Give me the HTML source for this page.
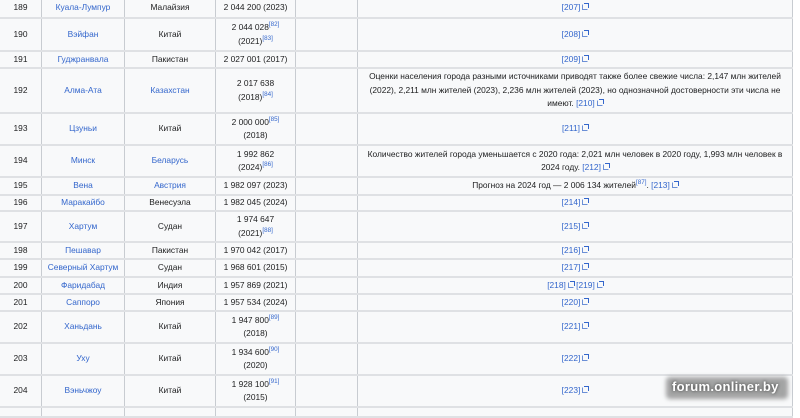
<!DOCTYPE html>
<html><head><meta charset="utf-8"><style>
*{margin:0;padding:0;box-sizing:border-box}
body{width:800px;height:409px;background:#fff;overflow:hidden;position:relative;font-family:"Liberation Sans",Arial,sans-serif;font-size:8.4px;color:#202122}
.r{position:absolute;left:0;width:793px;background:#f8f9fa;border-bottom:2px solid #dfe1e4}
.c{position:absolute;top:0;bottom:0;display:flex;align-items:center;justify-content:center;text-align:center;line-height:13.5px;border-right:1px solid #c8ccd1}
.c>div{width:100%}
.c1{left:0;width:42px}.c2{left:42px;width:83px}.c3{left:125px;width:91px}.c4{left:216px;width:80px}.c5{left:296px;width:62px}.c6{left:358px;width:435px;padding:0 5px}
a{color:#3366cc;text-decoration:none}
sup{font-size:6.3px;vertical-align:4px;line-height:0;color:#3366cc}
.e{display:inline-block;width:6px;height:6px;margin-left:2px;position:relative;border:1px solid #6b8fd6;border-top-color:transparent;border-right-color:transparent}
.e:after{content:"";position:absolute;right:-2px;top:-2px;width:4px;height:4px;border-top:1px solid #3366cc;border-right:1px solid #3366cc}
.wm{position:absolute;left:666px;top:377px;width:122px;height:22px;border-radius:4px;background:rgba(60,60,60,.45);filter:blur(2px)}
.wt{position:absolute;left:672px;top:379px;color:#fff;font-weight:bold;font-size:13px;letter-spacing:.3px;text-shadow:0 0 3px #333}
</style></head><body>

<div class="r" style="top:-1px;height:20px"><div class="c c1"><div>189</div></div><div class="c c2"><div><a>Куала-Лумпур</a></div></div><div class="c c3"><div>Малайзия</div></div><div class="c c4"><div>2 044 200 (2023)</div></div><div class="c c5"></div><div class="c c6"><div><a>[207]<i class="e"></i></a></div></div></div>
<div class="r" style="top:19px;height:33px"><div class="c c1"><div>190</div></div><div class="c c2"><div><a>Вэйфан</a></div></div><div class="c c3"><div>Китай</div></div><div class="c c4"><div>2 044 028<sup>[82]</sup><br>(2021)<sup>[83]</sup></div></div><div class="c c5"></div><div class="c c6"><div><a>[208]<i class="e"></i></a></div></div></div>
<div class="r" style="top:52px;height:17px"><div class="c c1"><div>191</div></div><div class="c c2"><div><a>Гуджранвала</a></div></div><div class="c c3"><div>Пакистан</div></div><div class="c c4"><div>2 027 001 (2017)</div></div><div class="c c5"></div><div class="c c6"><div><a>[209]<i class="e"></i></a></div></div></div>
<div class="r" style="top:69px;height:45px"><div class="c c1"><div>192</div></div><div class="c c2"><div><a>Алма-Ата</a></div></div><div class="c c3"><div><a>Казахстан</a></div></div><div class="c c4"><div>2 017 638<br>(2018)<sup>[84]</sup></div></div><div class="c c5"></div><div class="c c6"><div>Оценки населения города разными источниками приводят также более свежие числа: 2,147 млн жителей (2022), 2,211 млн жителей (2023), 2,236 млн жителей (2023), но однозначной достоверности эти числа не имеют. <a>[210]<i class="e"></i></a></div></div></div>
<div class="r" style="top:114px;height:32px"><div class="c c1"><div>193</div></div><div class="c c2"><div><a>Цзуньи</a></div></div><div class="c c3"><div>Китай</div></div><div class="c c4"><div>2 000 000<sup>[85]</sup><br>(2018)</div></div><div class="c c5"></div><div class="c c6"><div><a>[211]<i class="e"></i></a></div></div></div>
<div class="r" style="top:146px;height:32px"><div class="c c1"><div>194</div></div><div class="c c2"><div><a>Минск</a></div></div><div class="c c3"><div><a>Беларусь</a></div></div><div class="c c4"><div>1 992 862<br>(2024)<sup>[86]</sup></div></div><div class="c c5"></div><div class="c c6"><div>Количество жителей города уменьшается с 2020 года: 2,021 млн человек в 2020 году, 1,993 млн человек в 2024 году. <a>[212]<i class="e"></i></a></div></div></div>
<div class="r" style="top:178px;height:18px"><div class="c c1"><div>195</div></div><div class="c c2"><div><a>Вена</a></div></div><div class="c c3"><div><a>Австрия</a></div></div><div class="c c4"><div>1 982 097 (2023)</div></div><div class="c c5"></div><div class="c c6"><div>Прогноз на 2024 год — 2 006 134 жителей<sup>[87]</sup>. <a>[213]<i class="e"></i></a></div></div></div>
<div class="r" style="top:196px;height:16px"><div class="c c1"><div>196</div></div><div class="c c2"><div><a>Маракайбо</a></div></div><div class="c c3"><div>Венесуэла</div></div><div class="c c4"><div>1 982 045 (2024)</div></div><div class="c c5"></div><div class="c c6"><div><a>[214]<i class="e"></i></a></div></div></div>
<div class="r" style="top:212px;height:31px"><div class="c c1"><div>197</div></div><div class="c c2"><div><a>Хартум</a></div></div><div class="c c3"><div>Судан</div></div><div class="c c4"><div>1 974 647<br>(2021)<sup>[88]</sup></div></div><div class="c c5"></div><div class="c c6"><div><a>[215]<i class="e"></i></a></div></div></div>
<div class="r" style="top:243px;height:17px"><div class="c c1"><div>198</div></div><div class="c c2"><div><a>Пешавар</a></div></div><div class="c c3"><div>Пакистан</div></div><div class="c c4"><div>1 970 042 (2017)</div></div><div class="c c5"></div><div class="c c6"><div><a>[216]<i class="e"></i></a></div></div></div>
<div class="r" style="top:260px;height:18px"><div class="c c1"><div>199</div></div><div class="c c2"><div><a>Северный Хартум</a></div></div><div class="c c3"><div>Судан</div></div><div class="c c4"><div>1 968 601 (2015)</div></div><div class="c c5"></div><div class="c c6"><div><a>[217]<i class="e"></i></a></div></div></div>
<div class="r" style="top:278px;height:17px"><div class="c c1"><div>200</div></div><div class="c c2"><div><a>Фаридабад</a></div></div><div class="c c3"><div>Индия</div></div><div class="c c4"><div>1 957 869 (2021)</div></div><div class="c c5"></div><div class="c c6"><div><a>[218]<i class="e"></i> [219]<i class="e"></i></a></div></div></div>
<div class="r" style="top:295px;height:17px"><div class="c c1"><div>201</div></div><div class="c c2"><div><a>Саппоро</a></div></div><div class="c c3"><div>Япония</div></div><div class="c c4"><div>1 957 534 (2024)</div></div><div class="c c5"></div><div class="c c6"><div><a>[220]<i class="e"></i></a></div></div></div>
<div class="r" style="top:312px;height:32px"><div class="c c1"><div>202</div></div><div class="c c2"><div><a>Ханьдань</a></div></div><div class="c c3"><div>Китай</div></div><div class="c c4"><div>1 947 800<sup>[89]</sup><br>(2018)</div></div><div class="c c5"></div><div class="c c6"><div><a>[221]<i class="e"></i></a></div></div></div>
<div class="r" style="top:344px;height:32px"><div class="c c1"><div>203</div></div><div class="c c2"><div><a>Уху</a></div></div><div class="c c3"><div>Китай</div></div><div class="c c4"><div>1 934 600<sup>[90]</sup><br>(2020)</div></div><div class="c c5"></div><div class="c c6"><div><a>[222]<i class="e"></i></a></div></div></div>
<div class="r" style="top:376px;height:32px"><div class="c c1"><div>204</div></div><div class="c c2"><div><a>Вэньчжоу</a></div></div><div class="c c3"><div>Китай</div></div><div class="c c4"><div>1 928 100<sup>[91]</sup><br>(2015)</div></div><div class="c c5"></div><div class="c c6"><div><a>[223]<i class="e"></i></a></div></div></div>
<div class="r" style="top:408px;height:10px"><div class="c c1"></div><div class="c c2"></div><div class="c c3"></div><div class="c c4"></div><div class="c c5"></div><div class="c c6"></div></div>

<div class="wm"></div><div class="wt">forum.onliner.by</div>
</body></html>
